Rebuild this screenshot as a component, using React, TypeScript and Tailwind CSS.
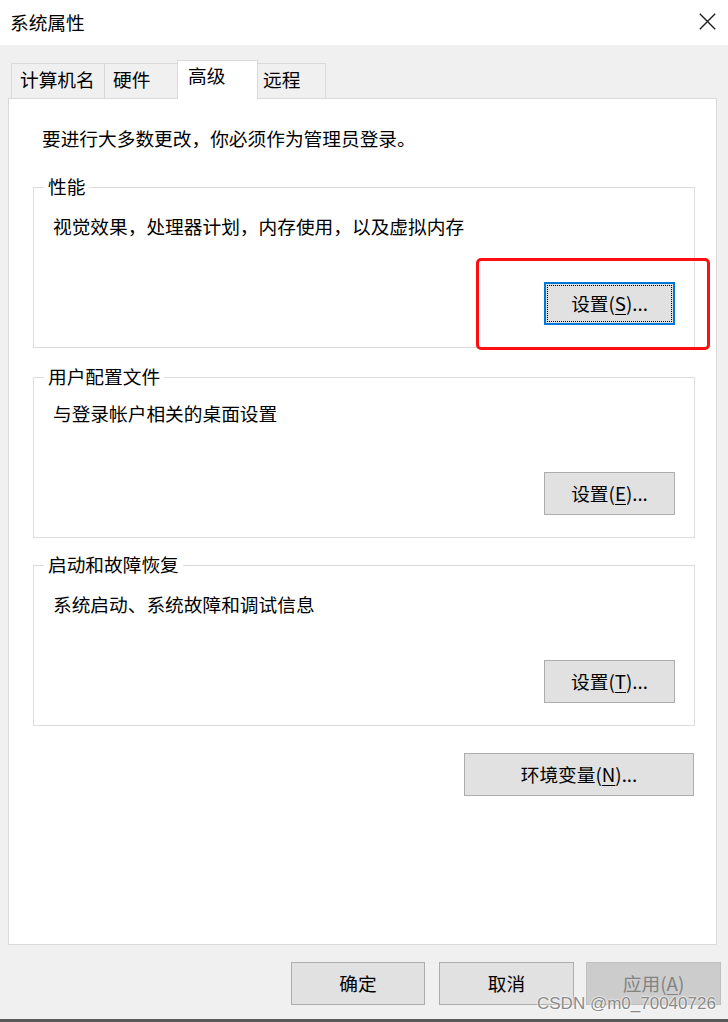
import React from "react";

function Btn({
  children,
  className = "",
  focused = false,
  disabled = false,
}: {
  children: React.ReactNode;
  className?: string;
  focused?: boolean;
  disabled?: boolean;
}) {
  const base = "flex items-center justify-center leading-[24px] pb-[2px]";
  const look = focused
    ? "bg-[#e1e1e1] border-2 border-[#0078d7] outline-1 outline-dotted outline-black outline-offset-[-4px] text-black"
    : disabled
    ? "bg-[#cccccc] border border-[#bfbfbf] text-[#838383]"
    : "bg-[#e1e1e1] border border-[#adadad] text-black";
  return <div className={`${base} ${look} ${className}`}>{children}</div>;
}

function U({ children }: { children: React.ReactNode }) {
  return <span className="underline underline-offset-[3px] decoration-1">{children}</span>;
}

function Group({
  label,
  desc,
  pt,
  mt,
  button,
}: {
  label: string;
  desc: string;
  pt: string;
  mt: string;
  button: React.ReactNode;
}) {
  return (
    <div
      className={`relative h-[161px] border border-[#dcdcdc] flex flex-col pl-[19px] pr-[19px] pb-[22px] ${pt} ${mt}`}
    >
      <span className="absolute left-[10px] top-[-14px] bg-white px-[4px] leading-[24px]">
        {label}
      </span>
      <p className="leading-[24px]">{desc}</p>
      <div className="mt-auto self-end">{button}</div>
    </div>
  );
}

export default function App() {
  return (
    <div className="relative w-[728px] h-[1022px] bg-[#f0f0f0] flex flex-col overflow-hidden text-black text-[18.7px] leading-[24px] font-['Noto_Sans_CJK_SC','Microsoft_YaHei',sans-serif]">
      {/* Title bar */}
      <div className="h-[45px] shrink-0 bg-white flex items-center justify-between pl-[10px] pr-[12px]">
        <span className="mt-[-2px]">系统属性</span>
        <svg width="17" height="17" viewBox="0 0 17 17" className="mt-[-2px]">
          <path d="M0.8 0.8L16.2 16.2M16.2 0.8L0.8 16.2" stroke="#1f1f1f" strokeWidth="1.4" fill="none" />
        </svg>
      </div>

      {/* Tabs */}
      <div className="mt-[15px] pl-[11px] h-[38px] shrink-0 flex items-end">
        <div className="w-[94px] h-[35px] border-t border-l border-r border-[#d9d9d9] bg-[#f0f0f0] pl-[8px] pt-[3px]">
          计算机名
        </div>
        <div className="-ml-px w-[74px] h-[35px] border-t border-l border-r border-[#d9d9d9] bg-[#f0f0f0] pl-[8px] pt-[3px]">
          硬件
        </div>
        <div className="relative z-10 -ml-px -mb-px w-[81px] h-[39px] border-t border-l border-r border-[#d9d9d9] bg-white pl-[10px] pt-[2px]">
          高级
        </div>
        <div className="-ml-px w-[69px] h-[35px] border-t border-l border-r border-[#d9d9d9] bg-[#f0f0f0] pl-[5px] pt-[3px]">
          远程
        </div>
      </div>

      {/* Panel */}
      <div className="ml-[8px] w-[709px] h-[847px] shrink-0 bg-white border border-[#d9d9d9] pt-[27px] pl-[24px] pr-[21px] flex flex-col">
        <p className="pl-[9px]">要进行大多数更改，你必须作为管理员登录。</p>

        <Group
          label="性能"
          desc="视觉效果，处理器计划，内存使用，以及虚拟内存"
          pt="pt-[26px]"
          mt="mt-[37px]"
          button={
            <Btn focused className="w-[131px] h-[43px]">
              设置(<U>S</U>)...
            </Btn>
          }
        />
        <Group
          label="用户配置文件"
          desc="与登录帐户相关的桌面设置"
          pt="pt-[23px]"
          mt="mt-[29px]"
          button={
            <Btn className="w-[131px] h-[43px]">
              设置(<U>E</U>)...
            </Btn>
          }
        />
        <Group
          label="启动和故障恢复"
          desc="系统启动、系统故障和调试信息"
          pt="pt-[26px]"
          mt="mt-[27px]"
          button={
            <Btn className="w-[131px] h-[43px]">
              设置(<U>T</U>)...
            </Btn>
          }
        />

        <div className="mt-[27px] self-end mr-[1px]">
          <Btn className="w-[230px] h-[43px]">
            环境变量(<U>N</U>)...
          </Btn>
        </div>
      </div>

      {/* Bottom buttons */}
      <div className="mt-[17px] flex pl-[291px]">
        <Btn className="w-[134px] h-[43px]">确定</Btn>
        <Btn className="ml-[14px] w-[135px] h-[43px]">取消</Btn>
        <Btn disabled className="ml-[12px] w-[135px] h-[43px]">
          应用(<U>A</U>)
        </Btn>
      </div>

      <div className="mt-auto h-[3px] bg-[#5a5a5a]" />

      {/* Annotation overlay */}
      <div className="absolute left-[476px] top-[258px] w-[234px] h-[92px] border-[3px] border-[#ff1010] rounded-[5px]" />

      {/* Watermark */}
      <div className="absolute left-[537px] top-[994px] text-[17px] leading-[20px] text-[#8a8a8a] font-['Liberation_Sans',Arial,sans-serif] [text-shadow:0_0_2px_#ffffff,0_0_2px_#ffffff]">
        CSDN @m0_70040726
      </div>
    </div>
  );
}
